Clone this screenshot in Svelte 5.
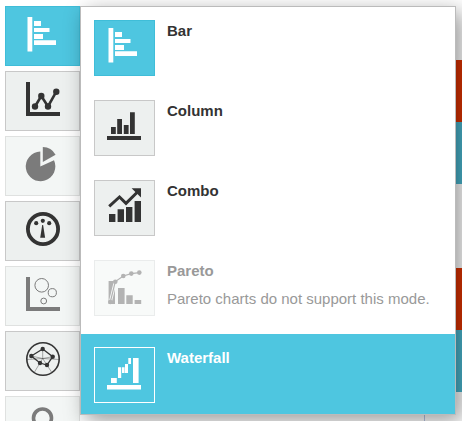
<script>
  let open = true
  let active = 'bar'
  let hovered = 'waterfall'

  const groups = [
    { id: 'bar', label: 'Bar charts' },
    { id: 'line', label: 'Line charts' },
    { id: 'pie', label: 'Pie charts', disabled: true },
    { id: 'gauge', label: 'Gauges' },
    { id: 'bubble', label: 'Bubble charts', disabled: true },
    { id: 'radar', label: 'Radar charts' },
    { id: 'map', label: 'Maps', disabled: true }
  ]

  const types = [
    { id: 'bar', label: 'Bar' },
    { id: 'column', label: 'Column' },
    { id: 'combo', label: 'Combo' },
    { id: 'pareto', label: 'Pareto', disabled: true, note: 'Pareto charts do not support this mode.' },
    { id: 'waterfall', label: 'Waterfall' }
  ]

  const toggle = (group) => {
    open = group.id === active ? !open : true
    active = group.id
  }
</script>

{#snippet icon(name)}
  <svg class="icon" viewBox="0 0 34 34" aria-hidden="true">
    {#if name === 'bar'}
      <path d="M1.5 0h4.8v34.5H1.5zM8 4h7v5H8zM8 11h15.5v4H8zM8 17h9v5H8zM8 23.3h22v4.7H8z" />
    {:else if name === 'line'}
      <path d="M0 0h4v30h30v4H0z" />
      <path class="stroke" stroke-width="2.6" d="M9 24.5L15.3 14L22 24.5L30.3 9.7" />
      <circle cx="9" cy="24.5" r="3.2" />
      <circle cx="15.3" cy="14" r="3.2" />
      <circle cx="22" cy="24.5" r="3.2" />
      <circle cx="30.3" cy="9.7" r="3.2" />
    {:else if name === 'pie'}
      <path d="M14.3 19.5V4.6A14.8 14.8 0 1 0 28 13.2z" />
      <path d="M16.8 15V0A14.8 14.8 0 0 1 29.6 7.8z" />
    {:else if name === 'gauge'}
      <circle class="stroke" cx="17" cy="17" r="15.1" stroke-width="3.8" />
      <circle cx="10.2" cy="11.2" r="2.1" />
      <circle cx="16.8" cy="8.8" r="2.1" />
      <circle cx="23.2" cy="11.2" r="2.1" />
      <path d="M16.2 13h.9l2 12.8h-4.9z" />
    {:else if name === 'bubble'}
      <path d="M0 0h4v30h30v4H0z" />
      <circle class="stroke" cx="15.7" cy="8.3" r="6.8" />
      <circle class="stroke" cx="26.3" cy="15.7" r="4.1" />
      <circle class="stroke" cx="17.7" cy="24" r="2.9" />
    {:else if name === 'radar'}
      <circle class="stroke" cx="17" cy="17" r="16.2" stroke-width="1.6" />
      <path class="stroke thin" d="M16.7 16.5V7M16.7 16.5L26.7 14.7M16.7 16.5L5.3 14M16.7 16.5L8.5 30M16.7 16.5L25.5 30M1 17.5L16.7 16.5L33 17.5" />
      <path class="stroke" stroke-width="1.3" d="M16.7 7L26.7 14.7L21 23L14 21L5.3 14z" />
      <circle cx="16.7" cy="7" r="2.2" />
      <circle cx="26.7" cy="14.7" r="2.2" />
      <circle cx="21" cy="23" r="2.2" />
      <circle cx="14" cy="21" r="2.2" />
      <circle cx="5.3" cy="14" r="2.2" />
    {:else if name === 'map'}
      <circle class="stroke" cx="16.5" cy="11" r="9" stroke-width="3.6" />
      <path class="stroke" stroke-width="3.6" d="M8.5 16L16.5 32L24.5 16" />
    {:else if name === 'column'}
      <path d="M4 19h4.8v7H4zM10.2 11H15v15h-4.8zM16.8 17h4.8v9h-4.8zM23 4.3h4.8V26H23zM0 28h34v4H0z" />
    {:else if name === 'combo'}
      <path d="M2 26h6.4v8H2zM10.6 21.3H17V34h-6.4zM19 19h6.4v15H19zM27.6 13H34v21h-6.4z" />
      <path class="stroke" stroke-width="3" d="M2.2 18.3L12.5 9L19 15.3L30.5 4" />
      <path d="M24.6 .3H34v9.3z" />
    {:else if name === 'pareto'}
      <path d="M1.6 13H8v23H1.6zM11 20h6.6v16H11zM19.3 27.3h6.4V36h-6.4zM27.6 32h6.6v4h-6.6z" />
      <path class="halo" d="M3.3 34L8.3 13.6" />
      <path class="stroke" stroke-width="1.2" d="M3.3 34L8.3 13.6L16.3 8L24.3 5.6L32.3 4.6" />
      <circle cx="3.3" cy="34" r="2.3" />
      <circle cx="8.3" cy="13.8" r="2.3" />
      <circle cx="16.3" cy="8" r="2.3" />
      <circle cx="24.3" cy="5.6" r="2.3" />
      <circle cx="32.3" cy="4.6" r="2.3" />
    {:else if name === 'waterfall'}
      <path d="M4 23h5.8v5H4zM11 12.3h3.2V23H11zM15 12.3h2.6V18H15zM18 9h3v9h-3zM21.3 3H24v6h-2.7zM26 3h5.6v25H26zM0 30h34v4.5H0z" />
    {/if}
  </svg>
{/snippet}

<div class="page">
  <nav class="groups" aria-label="Chart groups">
    {#each groups as group}
      <button
        class="tile"
        class:active={group.id === active}
        disabled={group.disabled}
        aria-label={group.label}
        on:click={() => toggle(group)}
      >
        {@render icon(group.id)}
      </button>
    {/each}
  </nav>

  <div class="chart">
    <div class="bars">
      <div class="pair"><div class="red"></div><div class="teal"></div></div>
      <div class="pair"><div class="red"></div><div class="teal"></div></div>
    </div>
    <div class="axis"></div>
  </div>

  {#if open}
    <div class="menu">
      {#each types as type}
        <button
          class="type"
          class:hovered={type.id === hovered}
          disabled={type.disabled}
          on:mouseenter={() => hovered = type.id}
        >
          <span class="box" class:active={type.id === 'bar'}>{@render icon(type.id)}</span>
          <span class="text">
            <strong>{type.label}</strong>
            {#if type.note}<span class="note">{type.note}</span>{/if}
          </span>
        </button>
      {/each}
    </div>
  {/if}
</div>

<style>
  :global(body) {
    background: #fff;
  }
  .page {
    position: relative;
    display: flex;
    height: 100vh;
    overflow: hidden;
    font-family: "Liberation Sans", Arial, sans-serif;
    font-size: 15px;
    color: #333;
  }
  button {
    box-sizing: border-box;
    margin: 0;
    font: inherit;
    color: inherit;
    cursor: pointer;
  }
  button:disabled {
    cursor: default;
  }
  .icon {
    display: block;
    width: 34px;
    height: 34px;
    flex: none;
    overflow: visible;
    fill: currentColor;
  }
  .stroke {
    fill: none;
    stroke: currentColor;
  }
  .thin {
    stroke-width: 1;
    opacity: .4;
  }
  .halo {
    stroke: #f8faf9;
    stroke-width: 3;
  }
  .groups {
    display: flex;
    flex-direction: column;
    gap: 5px;
    padding: 6px 0 0 5px;
  }
  .tile {
    display: flex;
    flex: none;
    width: 75px;
    height: 60px;
    padding: 10px 0 0 20px;
    border: 1px solid #c8c8c8;
    background: #edf0ef;
  }
  .tile:disabled {
    color: #7b7b7b;
    border-color: #dfe1e0;
    background: #f3f6f5;
  }
  .tile.active {
    color: #fff;
    border-color: #3fbdd8;
    background: #4ec6e0;
  }
  .chart {
    flex: 1;
    display: flex;
    flex-direction: column;
  }
  .bars {
    display: flex;
    flex-direction: column;
    gap: 84px;
    padding-top: 60px;
  }
  .red {
    height: 62px;
    background: #dc3200;
  }
  .teal {
    height: 62px;
    background: #4ab5cd;
  }
  .axis {
    flex: 1;
    margin-right: 37px;
    border-right: 1px solid #b8c4e4;
  }
  .menu {
    position: absolute;
    top: 6px;
    left: 80px;
    right: 6px;
    border: 1px solid #bbb;
    background: #fff;
    box-shadow: 6px 6px 20px rgba(0, 0, 0, .4);
  }
  .type {
    display: flex;
    align-items: flex-start;
    gap: 12px;
    width: 100%;
    min-height: 80px;
    padding: 13px 13px 11px;
    border: 0;
    background: none;
    text-align: left;
  }
  .type:disabled {
    min-height: 87px;
    color: #999;
  }
  .type.hovered {
    color: #fff;
    background: #4ec6e0;
  }
  .box {
    box-sizing: border-box;
    flex: none;
    width: 61px;
    height: 56px;
    padding: 7px 0 0 12px;
    border: 1px solid #c8c8c8;
    background: #edf0ef;
  }
  .box.active {
    color: #fff;
    border-color: #3fbdd8;
    background: #4ec6e0;
  }
  .type:disabled .box {
    color: #b3b3b3;
    border-color: #eaecec;
    background: #f8faf9;
  }
  .hovered .box {
    border-color: #fff;
    background: none;
  }
  .text {
    display: flex;
    flex-direction: column;
    gap: 8px;
    padding-top: 1px;
    line-height: 20px;
  }
</style>
